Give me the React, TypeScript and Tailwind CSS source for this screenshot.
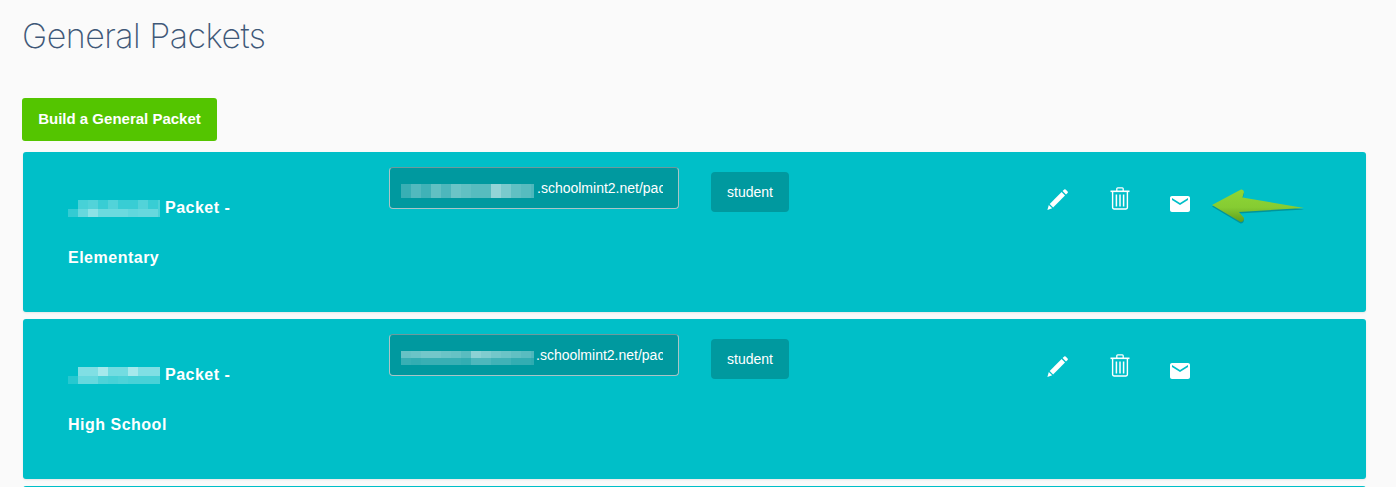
const titleFont = "font-['Liberation_Sans',Arial,sans-serif]";

// pixelated redaction blocks, opacity per cell
function Mosaic({ rows, cell, width, height, className }: { rows: number[][]; cell: number; width: number; height: number; className?: string }) {
  const rowH = height / rows.length;
  return (
    <svg width={width} height={height} className={className}>
      {rows.map((row, y) =>
        row.map((o, x) => (
          <rect key={`${x}-${y}`} x={x * cell} y={y * rowH} width={cell} height={rowH} fill="#ffffff" opacity={o} shapeRendering="crispEdges" />
        ))
      )}
    </svg>
  );
}

function Pencil() {
  return (
    <svg width="22" height="22" viewBox="0 0 22 22" fill="#ffffff">
      <path d="M0.4 22 L1.8 16.9 L5.2 20.3 Z" />
      <path d="M2.7 16 L14.6 4.1 L18 7.5 L6.1 19.4 Z" />
      <path d="M15.6 3.1 L17.2 1.5 Q17.9 0.8 18.6 1.5 L20.6 3.5 Q21.3 4.2 20.6 4.9 L19 6.5 Z" />
    </svg>
  );
}

function Trash() {
  return (
    <svg width="20" height="23" viewBox="0 0 20 23" fill="none" stroke="#ffffff" strokeWidth="1.3">
      <path d="M0.5 4.3 H19.5" strokeWidth="1.6" />
      <path d="M6.8 4 V1.8 Q6.8 0.9 7.7 0.9 H12.3 Q13.2 0.9 13.2 1.8 V4" />
      <path d="M2.6 5 V20.6 Q2.6 22 4 22 H16 Q17.4 22 17.4 20.6 V5" strokeWidth="1.4" />
      <path d="M6.4 7.5 V19.6 M10 7.5 V19.6 M13.6 7.5 V19.6" strokeWidth="1.5" />
    </svg>
  );
}

function Mail() {
  return (
    <svg width="24" height="24" viewBox="0 0 24 24" fill="#ffffff">
      <path d="M20 4H4c-1.1 0-1.99.9-1.99 2L2 18c0 1.1.9 2 2 2h16c1.1 0 2-.9 2-2V6c0-1.1-.9-2-2-2zm0 4l-8 5-8-5V6l8 5 8-5v2z" />
    </svg>
  );
}

function Arrow() {
  const d = "M1 17 L30 1.5 Q32.5 1 33 4 L31.5 9.5 L93 20 L28 24 L33 30 Q33 34 29.5 34 Z";
  return (
    <svg width="96" height="38" viewBox="0 0 96 38" className="absolute left-[1188px] top-[36px]">
      <defs>
        <linearGradient id="arrowFill" x1="0" y1="0" x2="0" y2="1">
          <stop offset="0" stopColor="#8ed636" />
          <stop offset="0.55" stopColor="#86cc32" />
          <stop offset="1" stopColor="#5f9f1e" />
        </linearGradient>
      </defs>
      <path d={d} fill="#00858c" opacity="0.75" transform="translate(0 1.5)" />
      <path d={d} fill="url(#arrowFill)" />
    </svg>
  );
}

function PacketCard({ mosaic, urlMosaic, subtitle, urlGap, showArrow }: { mosaic: number[][]; urlMosaic: number[][]; subtitle: string; urlGap: string; showArrow?: boolean }) {
  return (
    <div className="relative flex h-[160px] w-[1343px] ml-px shrink-0 items-start rounded-[3px] bg-[#00bfc8] pl-[45px] text-white shadow-[0_1px_2px_rgba(0,0,0,0.08)]">
      <div className="mt-[31px] w-[321px] shrink-0 text-[16px] leading-[50px] font-bold tracking-[0.5px]">
        <Mosaic rows={mosaic} cell={10} width={92} height={17} className="mr-[5px] inline-block align-[-4px]" />
        Packet -
        <br />
        {subtitle}
      </div>
      <div className="relative mt-[15px] h-[42px] w-[290px] shrink-0 rounded-[4px] border border-[#a9c4c6] border-t-[#6d9a9d] bg-[#00999f] py-[8px] pl-[15px] pr-[15px] text-[14px] leading-[24px]">
        <div className={`overflow-hidden whitespace-nowrap ${urlGap}`}>
          .schoolmint2.net/packets/general
        </div>
        <Mosaic rows={urlMosaic} cell={10} width={133} height={14} className="absolute left-[11px] top-[16px]" />
      </div>
      <div className="mt-[20px] ml-[32px] flex h-[40px] w-[78px] shrink-0 items-center justify-center rounded-[4px] bg-[#00999f] pt-px text-[14px]">
        student
      </div>
      <div className="ml-[258px] mt-[36px] flex items-start">
        <div className="w-[63px]"><Pencil /></div>
        <div className="-mt-px w-[58px]"><Trash /></div>
        <div className="mt-[4px]"><Mail /></div>
      </div>
      {showArrow && <Arrow />}
    </div>
  );
}

export default function App() {
  return (
    <div className={`h-[487px] w-[1396px] overflow-hidden bg-[#fafafa] pl-[22px] ${titleFont}`}>
      <h1 className="pt-[16px] font-['Inter',sans-serif] text-[34px] leading-[40px] font-extralight tracking-[-0.52px] text-[#3f5878]">
        General Packets
      </h1>
      <button className="mt-[42px] block h-[43px] w-[195px] rounded-[3px] bg-[#54c500] text-[15px] font-bold text-white">
        Build a General Packet
      </button>
      <div className="mt-[11px] flex flex-col gap-[7px]">
        <PacketCard
          subtitle="Elementary"
          urlGap="pl-[132px]"
          showArrow
          mosaic={[
            [0, 0.28, 0.32, 0.22, 0.32, 0.22, 0.22, 0.32, 0.22, 0.3],
            [0.2, 0.4, 0.55, 0.42, 0.42, 0.42, 0.38, 0.4, 0.4, 0.3],
          ]}
          urlMosaic={[
            [0.22, 0.32, 0.25, 0.38, 0.3, 0.42, 0.38, 0.34, 0.34, 0.58, 0.48, 0.38, 0.34, 0.3],
            [0.22, 0.32, 0.25, 0.38, 0.3, 0.42, 0.38, 0.34, 0.34, 0.58, 0.48, 0.38, 0.34, 0.3],
          ]}
        />
        <PacketCard
          subtitle="High School"
          urlGap="pl-[131px]"
          mosaic={[
            [0, 0.5, 0.5, 0.65, 0.45, 0.45, 0.65, 0.5, 0.5, 0.5],
            [0.15, 0.4, 0.4, 0.3, 0.28, 0.3, 0.28, 0.28, 0.28, 0.28],
          ]}
          urlMosaic={[
            [0.4, 0.42, 0.45, 0.45, 0.42, 0.4, 0.35, 0.55, 0.5, 0.45, 0.42, 0.38, 0.35, 0.3],
            [0.22, 0.2, 0.22, 0.22, 0.22, 0.22, 0.2, 0.3, 0.3, 0.25, 0.25, 0.2, 0.2, 0.18],
          ]}
        />
        <div className="ml-px h-[160px] w-[1343px] shrink-0 rounded-[3px] bg-[#00bfc8]" />
      </div>
    </div>
  );
}
